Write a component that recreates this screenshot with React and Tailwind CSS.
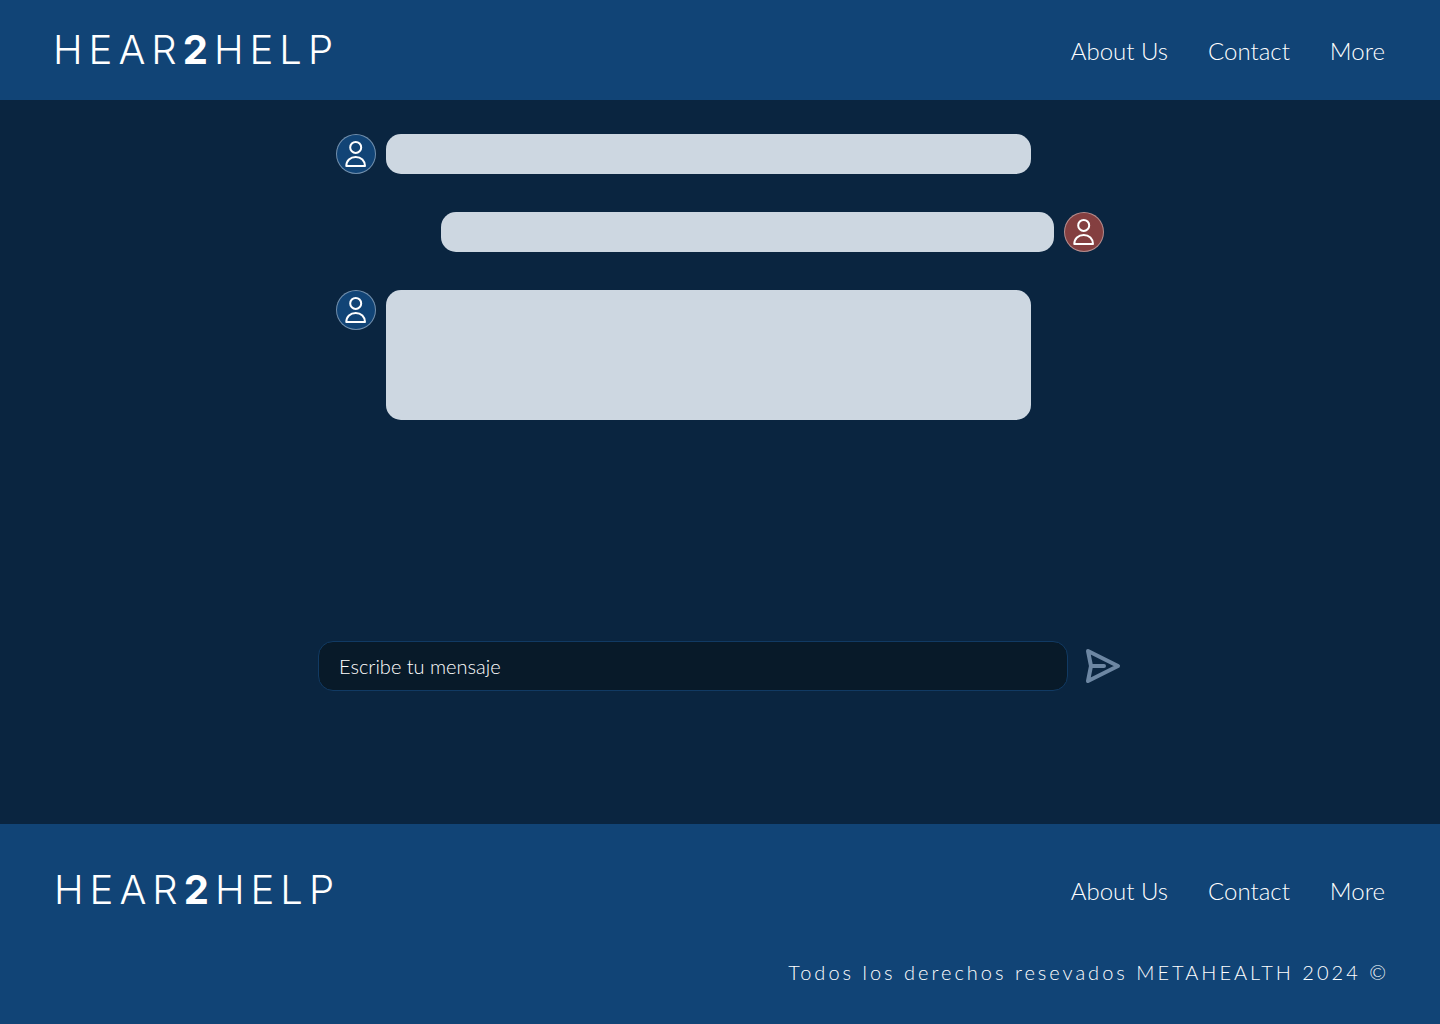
import React from "react";

function Logo() {
  return (
    <a href="#" className="font-['Inter',sans-serif] text-[40px] leading-[48px] font-light tracking-[6px] text-white">
      HEAR<span className="font-bold">2</span>HELP
    </a>
  );
}

function Links() {
  return (
    <nav className="flex gap-10 pt-0.5 text-2xl leading-8 font-light text-white">
      <a href="#about">About Us</a>
      <a href="#contact">Contact</a>
      <a href="#more">More</a>
    </nav>
  );
}

function Avatar({ red }) {
  return (
    <div className={`flex size-10 shrink-0 items-center justify-center rounded-full border border-white/40 ${red ? "bg-[#843f40]" : "bg-[#114476]"}`}>
      <svg width="24" height="28" viewBox="0 0 24 28" fill="none" stroke="white" strokeWidth="2" strokeLinejoin="round">
        <circle cx="11.7" cy="7.4" r="5.5" />
        <path d="M2.3 26C2.3 20.6 6.3 16.9 11.7 16.9S21 20.6 21 26Z" />
      </svg>
    </div>
  );
}

export default function App() {
  return (
    <div className="flex min-h-screen flex-col bg-[#0a2540] font-['Lato',sans-serif]">
      <header className="flex h-25 items-center justify-between bg-[#114476] pr-[55px] pl-[53px]">
        <Logo />
        <Links />
      </header>
      <main className="flex grow flex-col items-center pt-[34px]">
        <section className="flex w-full max-w-3xl flex-col gap-[38px]">
          <div className="flex gap-2.5">
            <Avatar />
            <div className="h-10 w-[645px] rounded-[15px] bg-[#cdd7e1]" />
          </div>
          <div className="flex justify-end gap-2.5">
            <div className="h-10 w-[613px] rounded-[15px] bg-[#cdd7e1]" />
            <Avatar red />
          </div>
          <div className="flex gap-2.5">
            <Avatar />
            <div className="h-[130px] w-[645px] rounded-[15px] bg-[#cdd7e1]" />
          </div>
        </section>
        <form className="mt-auto mb-[133px] flex w-full max-w-[804px] items-center gap-4" onSubmit={(e) => e.preventDefault()}>
          <input
            type="text"
            aria-label="Escribe tu mensaje"
            placeholder="Escribe tu mensaje"
            className="h-[50px] grow rounded-[15px] border border-[#113a63] bg-[#081a29] px-5 text-xl font-light text-white placeholder:text-white"
          />
          <button type="submit" aria-label="Enviar" className="text-[#6d87a3]">
            <svg width="38" height="38" viewBox="0 0 38 38" fill="none" stroke="currentColor" strokeWidth="4" strokeLinejoin="round" strokeLinecap="round">
              <path d="M4 4L34 19L4 34L7 19ZM7 19H20" />
            </svg>
          </button>
        </form>
      </main>
      <footer className="flex h-50 flex-col bg-[#114476] pt-[42px] pr-[51px] pl-[54px]">
        <div className="flex items-center justify-between pr-1">
          <Logo />
          <Links />
        </div>
        <p className="mt-11 text-right text-xl leading-7 font-light tracking-[3px] text-white">
          Todos los derechos resevados METAHEALTH 2024 ©
        </p>
      </footer>
    </div>
  );
}
